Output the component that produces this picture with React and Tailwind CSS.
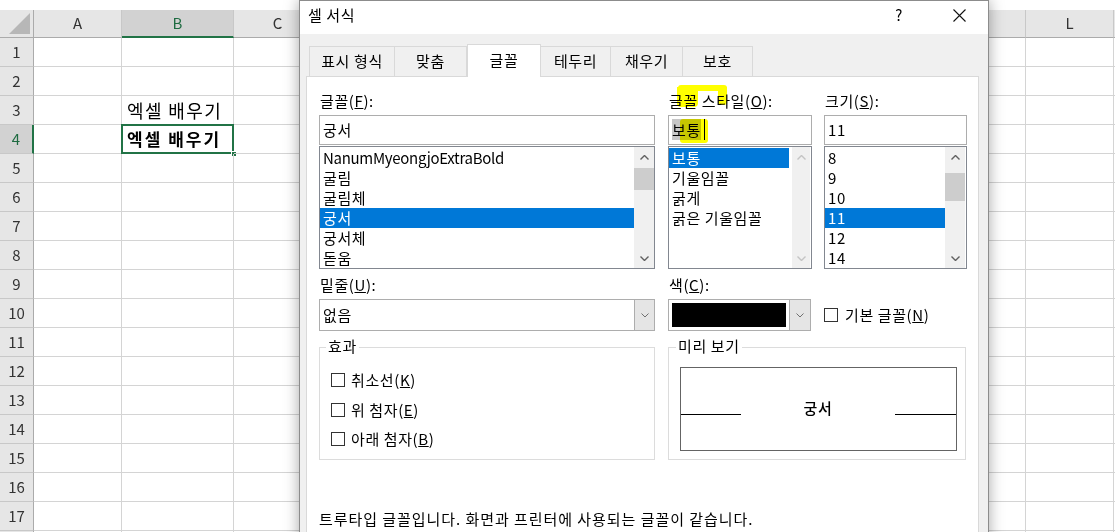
import React from "react";

const COLS = ["A", "B", "C", "D", "E", "F", "G", "H", "I", "J", "K", "L"];
const ROWS = Array.from({ length: 18 }, (_, i) => i + 1);

function Arrow({ up, disabled }) {
  return (
    <svg width="9" height="5" viewBox="0 0 9 5">
      <path
        d={up ? "M0.5 4.5 L4.5 0.5 L8.5 4.5" : "M0.5 0.5 L4.5 4.5 L8.5 0.5"}
        fill="none"
        stroke={disabled ? "#c4c4c4" : "#606060"}
        strokeWidth="1.4"
      />
    </svg>
  );
}

function Chevron() {
  return (
    <svg width="8" height="5" viewBox="0 0 8 5">
      <path d="M0.5 0.5 L4 4 L7.5 0.5" fill="none" stroke="#707070" strokeWidth="1" />
    </svg>
  );
}

function Check() {
  return <span className="block h-[14px] w-[14px] shrink-0 border border-[#333] bg-white" />;
}

function Label({ children }) {
  return <div className="mb-[4px] h-[20px] pl-px leading-[20px]">{children}</div>;
}

function ListBox({ items, selected, thumbTop, thumbH, disabled, barW = "w-[20px]" }) {
  return (
    <div className="mt-px flex h-[123px] border border-[#828790] bg-white">
      <div className="flex-1 pt-px">
        {items.map((it, i) => (
          <div
            key={it}
            className={
              "h-[20px] pl-[3px] leading-[19px] " +
              (/^[A-Za-z]/.test(it) ? "tracking-[-0.3px] " : "") +
              (i === selected ? "bg-[#0078d7] text-white" : "")
            }
          >
            {it}
          </div>
        ))}
      </div>
      <div className={"flex flex-col bg-[#f0f0f0] " + barW}>
        <div className="flex h-[20px] items-center justify-center">
          <Arrow up disabled={disabled} />
        </div>
        {!disabled && <div className="bg-[#cdcdcd]" style={{ marginTop: thumbTop, height: thumbH }} />}
        <div className="flex-1" />
        <div className="flex h-[20px] items-center justify-center">
          <Arrow disabled={disabled} />
        </div>
      </div>
    </div>
  );
}

function Sheet() {
  return (
    <div className="grid grid-cols-[34px_88px_112px_repeat(10,88px)_1fr] pt-[10px]">
      <div className="relative h-[28px] border-b border-r border-[#ababab] bg-[#e6e6e6]">
        <svg className="absolute bottom-[3px] right-[3px]" width="21" height="21" viewBox="0 0 21 21">
          <path d="M21 0 L21 21 L0 21 Z" fill="#b7b7b7" />
        </svg>
      </div>
      {COLS.map((c) => (
        <div
          key={c}
          className={
            "flex h-[28px] items-center justify-center border-r border-[#c8c8c8] text-[15px] " +
            (c === "B"
              ? "border-b-2 border-b-[#217346] bg-[#d2d2d2] text-[#1e6b41]"
              : "border-b border-b-[#ababab] bg-[#e6e6e6] text-[#333]")
          }
        >
          {c}
        </div>
      ))}
      <div className="h-[28px] border-b border-[#ababab] bg-[#e6e6e6]" />
      {ROWS.map((r) => (
        <React.Fragment key={r}>
          <div
            className={
              "flex h-[29px] items-center justify-center border-b border-[#c8c8c8] text-[15px] " +
              (r === 4
                ? "border-r-2 border-r-[#217346] bg-[#d2d2d2] text-[#1e6b41]"
                : "border-r border-r-[#ababab] bg-[#e6e6e6] text-[#333]")
            }
          >
            {r < 18 ? r : ""}
          </div>
          {COLS.map((c) => (
            <div key={c} className="relative flex h-[29px] items-center border-b border-r border-[#d4d4d4] pl-[5px] text-[18px]">
              {c === "B" && r === 3 && <span className="tracking-[1.4px]">엑셀 배우기</span>}
              {c === "B" && r === 4 && (
                <>
                  <span className="text-[17px] font-bold tracking-[2px]">엑셀 배우기</span>
                  <div className="absolute -left-px -top-px bottom-[-1px] right-[-1px] border-2 border-[#217346]" />
                  <div className="absolute bottom-[-4px] right-[-4px] h-[6px] w-[6px] border border-white bg-[#217346]" />
                </>
              )}
            </div>
          ))}
          <div className="h-[29px] border-b border-[#d4d4d4]" />
        </React.Fragment>
      ))}
    </div>
  );
}

const TABS = [
  ["표시 형식", "w-[86px]"],
  ["맞춤", "w-[72px]"],
  ["글꼴", "w-[74px]"],
  ["테두리", "w-[70px]"],
  ["채우기", "w-[72px]"],
  ["보호", "w-[70px]"],
];

function Dialog() {
  return (
    <div className="absolute left-[299px] top-0 flex h-[570px] w-[690px] flex-col border border-[#8c8c8c] bg-[#f0f0f0] text-[15px] tracking-[0.6px] shadow-[0_0_14px_rgba(0,0,0,0.35)]">
      <div className="flex h-[33px] shrink-0 items-center bg-white pb-[5px] pl-[8px]">
        <span>셀 서식</span>
        <span className="ml-auto">?</span>
        <svg className="ml-[50px] mr-[22px]" width="13" height="13" viewBox="0 0 13 13">
          <path d="M0.5 0.5 L12.5 12.5 M12.5 0.5 L0.5 12.5" stroke="#111" strokeWidth="1.1" />
        </svg>
      </div>

      <div className="relative z-10 flex h-[42px] shrink-0 items-end pl-[9px]">
        {TABS.map(([t, w], i) => (
          <div
            key={t}
            className={
              "flex items-center justify-center border-t border-r border-[#d9d9d9] pb-px " +
              w +
              (i === 0 ? " border-l" : "") +
              (i === 2 ? " relative top-px h-[33px] border-l bg-white" : " h-[30px] bg-[#f0f0f0]")
            }
          >
            {t}
          </div>
        ))}
      </div>

      <div className="ml-[6px] mr-[9px] flex-1 border border-[#d9d9d9] bg-white pl-[12px] pt-[14px] text-black">
        <div className="flex">
          <div className="w-[336px]">
            <Label>
              글꼴(<u>F</u>):
            </Label>
            <div className="h-[30px] border border-[#adadad] px-[3px] leading-[27px]">궁서</div>
            <ListBox
              items={["NanumMyeongjoExtraBold", "굴림", "굴림체", "궁서", "궁서체", "돋움"]}
              selected={3}
              thumbTop={1}
              thumbH={22}
            />
          </div>

          <div className="relative ml-[13px] w-[144px]">
            <Label>
              글꼴 스타일(<u>O</u>):
            </Label>
            <div className="relative h-[30px] border border-[#adadad] px-[3px] leading-[27px]">
              <span className="bg-[#c6c6c6]">보통</span>
              <span className="absolute left-[35px] top-[3px] h-[21px] w-px bg-black" />
            </div>
            <ListBox
              items={["보통", "기울임꼴", "굵게", "굵은 기울임꼴"]}
              selected={0}
              disabled
              barW="w-[18px] ml-[3px] mr-px"
            />
            {/* yellow marker strokes */}
            <div className="pointer-events-none absolute left-[10px] top-[-6px] h-[6px] w-[49px] rounded-[3px] bg-[#ffff00] mix-blend-multiply" />
            <div className="pointer-events-none absolute left-[9px] top-[-4px] h-[20px] w-[21px] rounded-b-[4px] bg-[#ffff00] mix-blend-multiply" />
            <div className="pointer-events-none absolute left-[50px] top-[-4px] h-[18px] w-[9px] rounded-b-[3px] bg-[#ffff00] mix-blend-multiply" />
            <div className="pointer-events-none absolute left-[12px] top-[28px] h-[24px] w-[28px] rounded-[3px] bg-[#ffff00] mix-blend-multiply" />
          </div>

          <div className="ml-[12px] w-[143px]">
            <Label>
              크기(<u>S</u>):
            </Label>
            <div className="h-[30px] border border-[#adadad] px-[3px] leading-[27px]">11</div>
            <ListBox items={["8", "9", "10", "11", "12", "14"]} selected={3} thumbTop={6} thumbH={28} barW="w-[20px] mr-px" />
          </div>
        </div>

        <div className="mt-[6px] flex">
          <div className="w-[336px]">
            <Label>
              밑줄(<u>U</u>):
            </Label>
            <div className="flex h-[32px] border border-[#adadad]">
              <div className="flex-1 pl-[3px] leading-[29px]">없음</div>
              <div className="flex w-[20px] items-center justify-center border-l border-[#adadad] bg-[#e5e5e5]">
                <Chevron />
              </div>
            </div>
          </div>
          <div className="ml-[13px] w-[143px]">
            <Label>
              색(<u>C</u>):
            </Label>
            <div className="flex h-[32px] border border-[#adadad]">
              <div className="flex-1 p-[3px]">
                <div className="h-full bg-black" />
              </div>
              <div className="flex w-[21px] items-center justify-center border-l border-[#adadad] bg-[#e5e5e5]">
                <Chevron />
              </div>
            </div>
          </div>
          <div className="ml-[13px] mt-[24px] flex h-[32px] items-center">
            <Check />
            <span className="ml-[7px]">
              기본 글꼴(<u>N</u>)
            </span>
          </div>
        </div>

        <div className="mt-[16px] flex">
          <div className="relative h-[113px] w-[336px] border border-[#dcdcdc] pl-[11px] pt-[22px]">
            <span className="absolute left-[6px] top-[-12px] bg-white px-[2px] leading-[20px]">효과</span>
            {[
              ["취소선", "K"],
              ["위 첨자", "E"],
              ["아래 첨자", "B"],
            ].map(([t, k], i) => (
              <div key={t} className={"flex h-[20px] items-center " + (i === 0 ? "" : i === 1 ? "mt-[10px]" : "mt-[9px]")}>
                <Check />
                <span className="ml-[6px]">
                  {t}(<u>{k}</u>)
                </span>
              </div>
            ))}
          </div>
          <div className="relative ml-[13px] h-[113px] w-[298px] border border-[#dcdcdc] pl-[11px] pt-[19px]">
            <span className="absolute left-[7px] top-[-12px] bg-white px-[2px] leading-[20px]">미리 보기</span>
            <div className="flex h-[84px] w-[277px] items-center border border-[#646464]">
              <div className="mt-[11px] h-px w-[60px] bg-black" />
              <div className="mb-px flex-1 text-center font-medium">궁서</div>
              <div className="mt-[11px] h-px w-[61px] bg-black" />
            </div>
          </div>
        </div>

        <div className="mt-[49px] h-[20px] leading-[20px] tracking-[0.95px]">
          트루타입 글꼴입니다. 화면과 프린터에 사용되는 글꼴이 같습니다.
        </div>
      </div>
    </div>
  );
}

export default function App() {
  return (
    <div className="relative h-[532px] w-[1115px] overflow-hidden bg-white font-['Noto_Sans_CJK_KR','Noto_Sans',sans-serif] text-black">
      <Sheet />
      <Dialog />
    </div>
  );
}
